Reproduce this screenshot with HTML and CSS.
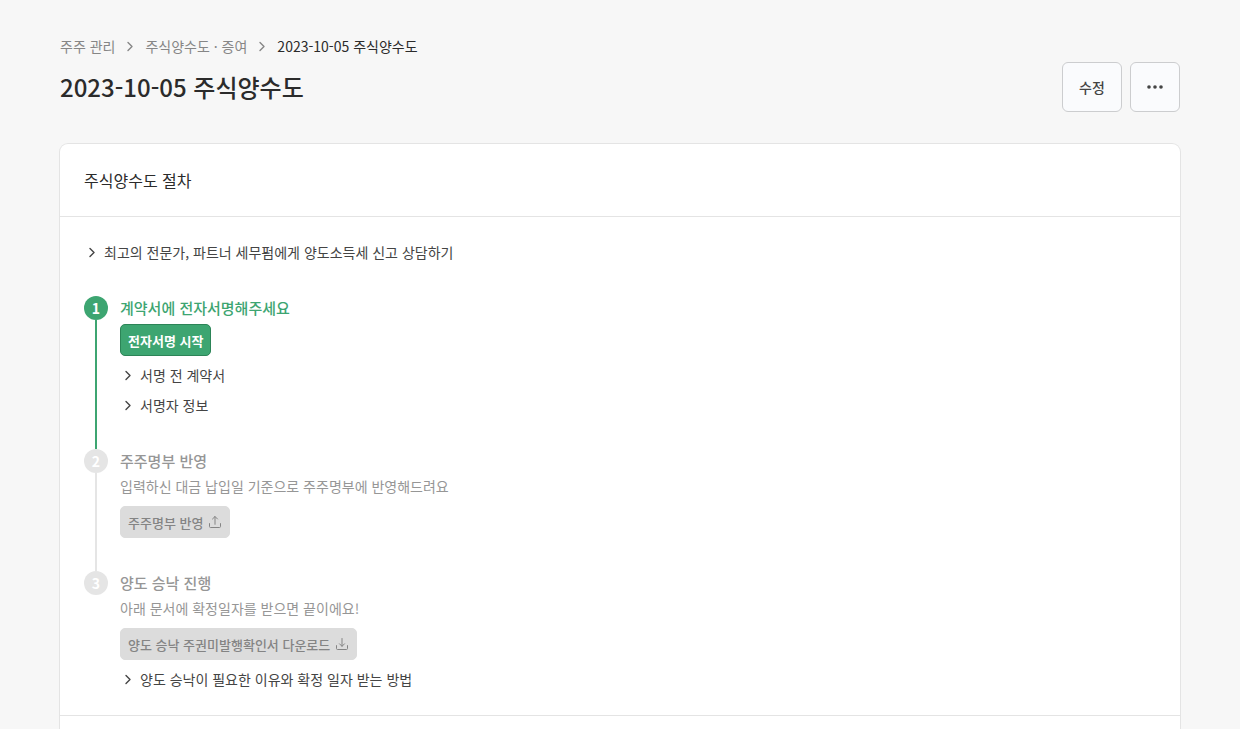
FILE: index.html
```html
<!DOCTYPE html>
<html lang="ko">
<head>
    <meta charset="UTF-8">
    <meta name="viewport" content="width=device-width, initial-scale=1.0">
    <title>2023-10-05 주식양수도</title>
    <link rel="stylesheet" href="styles.css">
</head>
<body>
    <!-- shared icons -->
    <svg class="sprite" aria-hidden="true">
        <symbol id="chevron" viewBox="0 0 16 16">
            <path d="M6 3.5 10 7.5l-4 4" fill="none" stroke="currentColor" stroke-width="1.4" stroke-linecap="round" stroke-linejoin="round"/>
        </symbol>
        <symbol id="upload" viewBox="0 0 14 14">
            <path d="M7 9.3V1.6M4.5 4 7 1.5 9.5 4M1.5 8.6v3c0 .5.4.9.9.9h9.2c.5 0 .9-.4.9-.9v-3" fill="none" stroke="currentColor" stroke-linecap="round" stroke-linejoin="round"/>
        </symbol>
        <symbol id="download" viewBox="0 0 14 14">
            <path d="M7 1.5v7.7M4.5 6.8 7 9.3l2.5-2.5M1.5 8.6v3c0 .5.4.9.9.9h9.2c.5 0 .9-.4.9-.9v-3" fill="none" stroke="currentColor" stroke-linecap="round" stroke-linejoin="round"/>
        </symbol>
    </svg>

    <div class="container">
        <header class="page-header">
            <div>
                <nav class="breadcrumb" aria-label="breadcrumb">
                    <a href="#">주주 관리</a>
                    <svg class="icon"><use href="#chevron"/></svg>
                    <a href="#">주식양수도 · 증여</a>
                    <svg class="icon"><use href="#chevron"/></svg>
                    <span class="current">2023-10-05 주식양수도</span>
                </nav>
                <h1>2023-10-05 주식양수도</h1>
            </div>
            <div class="actions">
                <button type="button" class="action-button edit">수정</button>
                <button type="button" class="action-button more" aria-label="더보기">
                    <svg class="dots" viewBox="0 0 16 16" fill="currentColor"><circle cx="2" cy="8" r="1.8"/><circle cx="8" cy="8" r="1.8"/><circle cx="14" cy="8" r="1.8"/></svg>
                </button>
            </div>
        </header>

        <main class="card">
            <h2>주식양수도 절차</h2>
            <section class="card-body">
                <button type="button" class="expander" aria-expanded="false">
                    <svg class="icon"><use href="#chevron"/></svg>최고의 전문가, 파트너 세무펌에게 양도소득세 신고 상담하기
                </button>

                <ol class="steps">
                    <li class="step active">
                        <div class="marker"><span class="number">1</span></div>
                        <div class="step-content">
                            <h3>계약서에 전자서명해주세요</h3>
                            <button type="button" class="button primary">전자서명 시작</button>
                            <button type="button" class="expander" aria-expanded="false">
                                <svg class="icon"><use href="#chevron"/></svg>서명 전 계약서
                            </button>
                            <button type="button" class="expander" aria-expanded="false">
                                <svg class="icon"><use href="#chevron"/></svg>서명자 정보
                            </button>
                        </div>
                    </li>
                    <li class="step">
                        <div class="marker"><span class="number">2</span></div>
                        <div class="step-content">
                            <h3>주주명부 반영</h3>
                            <p>입력하신 대금 납입일 기준으로 주주명부에 반영해드려요</p>
                            <button type="button" class="button" disabled>주주명부 반영<svg class="button-icon"><use href="#upload"/></svg></button>
                        </div>
                    </li>
                    <li class="step">
                        <div class="marker"><span class="number">3</span></div>
                        <div class="step-content">
                            <h3>양도 승낙 진행</h3>
                            <p>아래 문서에 확정일자를 받으면 끝이에요!</p>
                            <button type="button" class="button" disabled>양도 승낙 주권미발행확인서 다운로드<svg class="button-icon"><use href="#download"/></svg></button>
                            <button type="button" class="expander" aria-expanded="false">
                                <svg class="icon"><use href="#chevron"/></svg>양도 승낙이 필요한 이유와 확정 일자 받는 방법
                            </button>
                        </div>
                    </li>
                </ol>
            </section>
            <section class="card-next"></section>
        </main>
    </div>
</body>
</html>
```
FILE: styles.css
```css
* {
    box-sizing: border-box;
}
html {
    overflow: hidden auto;
    scrollbar-width: none;
}
body {
    margin: 0;
    background-color: #f7f7f7;
    color: #2b2b2b;
    font-family: "Noto Sans CJK KR", "Noto Sans", sans-serif;
    font-size: 14px;
    line-height: 21px;
}
h1, h2, h3, p, ol {
    margin: 0;
    padding: 0;
}
button {
    font-family: inherit;
    cursor: pointer;
}
.sprite {
    display: none;
}
.icon {
    width: 16px;
    height: 16px;
    flex: none;
}
.container {
    padding: 36px 60px 0;
}

/* page header */
.page-header {
    display: flex;
    justify-content: space-between;
    align-items: flex-end;
    margin-bottom: 32px;
}
.breadcrumb {
    display: flex;
    align-items: center;
    gap: 7px;
    color: #868686;
}
.breadcrumb a {
    color: inherit;
    text-decoration: none;
}
.breadcrumb .current {
    color: #2b2b2b;
}
h1 {
    margin: 12px 0 7px;
    font-size: 24px;
    font-weight: 500;
    line-height: 36px;
}
.actions {
    display: flex;
    gap: 8px;
}
.action-button {
    display: flex;
    align-items: center;
    justify-content: center;
    height: 50px;
    padding: 0 16px;
    border: 1px solid #cccdcf;
    border-radius: 6px;
    background-color: #fafbfd;
    color: #444;
    font-size: 14px;
    font-weight: 500;
}
.edit {
    width: 60px;
}
.more {
    width: 50px;
}
.dots {
    width: 16px;
    height: 16px;
}

/* card */
.card {
    background-color: #fff;
    border-radius: 8px;
    box-shadow: 0 0 0 1px #e4e4e4;
}
h2 {
    padding: 24px;
    border-bottom: 1px solid #e4e4e4;
    font-size: 16px;
    font-weight: 400;
    line-height: 24px;
}
.card-body {
    padding: 25px 24px;
}
.card-next {
    min-height: 120px;
    border-top: 1px solid #e4e4e4;
}
.expander {
    display: flex;
    align-items: center;
    gap: 4px;
    padding: 0;
    border: 0;
    background: none;
    color: #444;
    font-size: 14px;
    line-height: 21px;
    text-align: left;
}

/* steps */
.steps {
    margin-top: 33px;
    list-style: none;
}
.step {
    display: flex;
    gap: 12px;
    color: #969696;
}
.marker {
    display: flex;
    flex-direction: column;
    align-items: center;
}
.number {
    width: 24px;
    height: 24px;
    border-radius: 50%;
    background-color: #e5e5e5;
    color: #fff;
    font-size: 14px;
    font-weight: 700;
    line-height: 24px;
    text-align: center;
}
/* line down to the next step */
.step:not(:last-child) .marker::after {
    content: "";
    flex: 1;
    width: 2px;
    background-color: #e5e5e5;
}
.step.active .number,
.step.active .marker::after {
    background-color: #3da571;
}
.step:not(:last-child) .step-content {
    padding-bottom: 33px;
}
h3 {
    font-size: 15px;
    font-weight: 500;
    line-height: 24px;
}
.active h3 {
    margin-bottom: 4px;
    color: #3da571;
}
.step p {
    margin: 3px 0 9px;
}
.step .expander {
    margin-top: 9px;
}
.button {
    display: flex;
    align-items: center;
    gap: 5px;
    height: 32px;
    padding: 0 7px;
    border: 1px solid #dcdcdc;
    border-radius: 5px;
    background-color: #dcdcdc;
    color: #848484;
    font-size: 13px;
    font-weight: 500;
}
.button:disabled {
    cursor: default;
}
.button.primary {
    border-color: #2c8457;
    background-color: #3da571;
    color: #fff;
    font-weight: 700;
}
.button-icon {
    width: 14px;
    height: 14px;
}
```
